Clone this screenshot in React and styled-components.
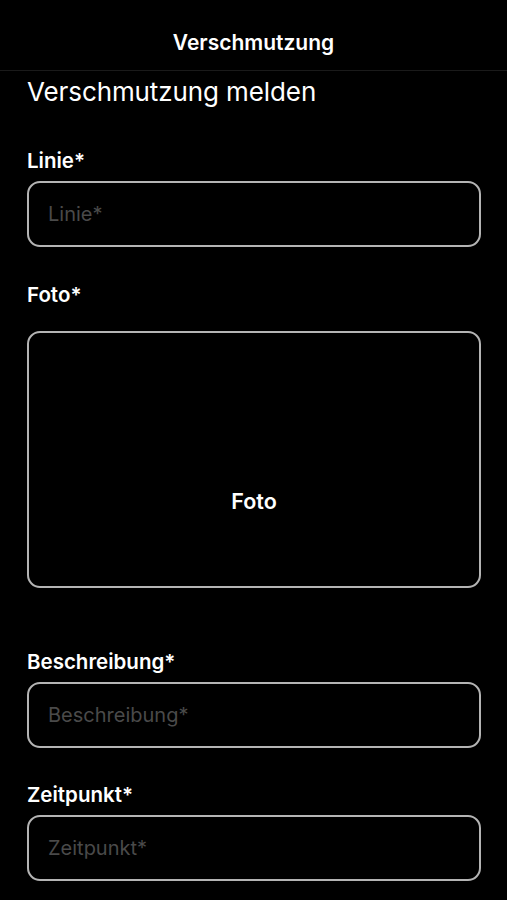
import React from "react"
import styled, { createGlobalStyle } from "styled-components"

const GlobalStyle = createGlobalStyle`
  body {
    margin: 0;
    background: #000;
    font-family: Inter, "Open Sans", "Liberation Sans", sans-serif;
    color: #fff;
  }
`

const Screen = styled.div`
  width: 507px;
  min-height: 900px;
  background: #000;
`

const NavBar = styled.header`
  height: 71px;
  box-sizing: border-box;
  padding-top: 16px;
  display: flex;
  align-items: center;
  justify-content: center;
  border-bottom: 1px solid #1a1a1a;
`

const NavTitle = styled.h1`
  margin: 0;
  font-size: 21px;
  line-height: 26px;
  font-weight: 600;
`

const Form = styled.main`
  padding: 0 26px 0 27px;
  display: flex;
  flex-direction: column;
`

const Heading = styled.h2`
  margin: 5px 0 0;
  font-size: 26px;
  line-height: 32px;
  font-weight: 400;
  letter-spacing: -0.1px;
`

const Label = styled.label`
  display: block;
  margin-top: ${p => p.$mt}px;
  font-size: 20.5px;
  line-height: 24px;
  font-weight: 600;
`

const Input = styled.input`
  box-sizing: border-box;
  width: 454px;
  height: 66px;
  margin-top: 8px;
  padding: 0 19px;
  border: 2px solid #b4b4b4;
  border-radius: 13px;
  background: #000;
  color: #fff;
  font-family: inherit;
  font-size: 20px;
  outline: none;

  &::placeholder {
    color: #4a4a4a;
  }
`

const PhotoBox = styled.button`
  box-sizing: border-box;
  width: 454px;
  height: 257px;
  margin-top: 24px;
  padding: 155px 0 0;
  display: flex;
  justify-content: center;
  align-items: flex-start;
  border: 2px solid #b4b4b4;
  border-radius: 13px;
  background: #000;
  color: #fff;
  font-family: inherit;
  font-size: 21.5px;
  line-height: 26px;
  font-weight: 600;
`

const fields = [
  { name: "Beschreibung*", mt: 62 },
  { name: "Zeitpunkt*", mt: 35 },
]

export default function App() {
  return (
    <Screen>
      <GlobalStyle />
      <NavBar>
        <NavTitle>Verschmutzung</NavTitle>
      </NavBar>
      <Form>
        <Heading>Verschmutzung melden</Heading>
        <Label $mt={41}>Linie*</Label>
        <Input placeholder="Linie*" />
        <Label $mt={36}>Foto*</Label>
        <PhotoBox>Foto</PhotoBox>
        {fields.map(f => (
          <React.Fragment key={f.name}>
            <Label $mt={f.mt}>{f.name}</Label>
            <Input placeholder={f.name} />
          </React.Fragment>
        ))}
      </Form>
    </Screen>
  )
}
